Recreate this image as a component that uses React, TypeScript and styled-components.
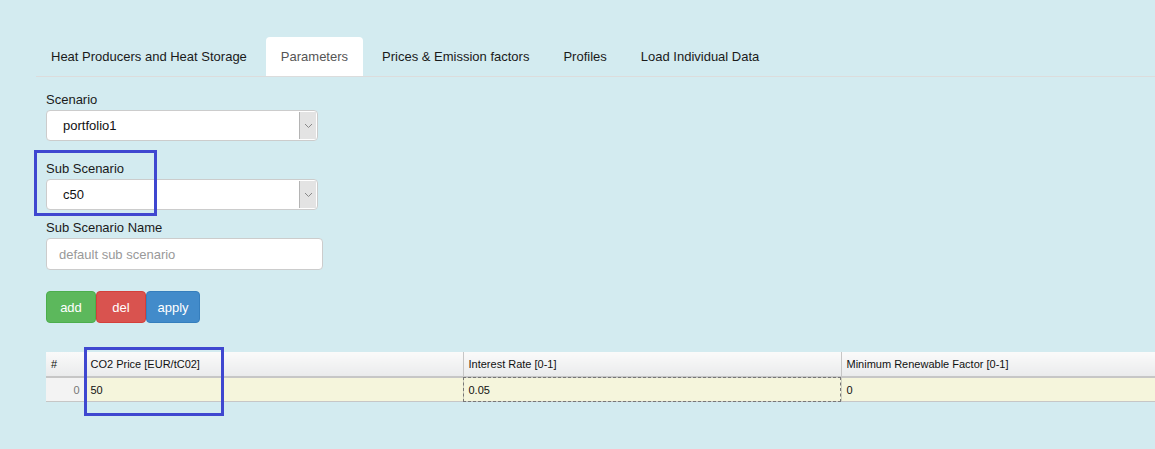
import React from 'react';
import styled, { createGlobalStyle, css } from 'styled-components';

const GlobalStyle = createGlobalStyle`
  html {
    overflow: hidden;
    background: #d3ebf0;
  }
  body {
    margin: 0;
    padding: 0;
    background: #d3ebf0;
    font-family: "Liberation Sans", Arial, sans-serif;
    color: #222;
  }
`;

const Page = styled.div`
  padding: 37px 0 0 36px;
`;

const TabBar = styled.ul`
  display: flex;
  list-style: none;
  margin: 0;
  padding: 0;
  border-bottom: 1px solid #dcdcdc;
`;

const Tab = styled.li<{ $active?: boolean }>`
  height: 39px;
  line-height: 39px;
  padding: 0 15px;
  margin-right: 4px;
  font-size: 13px;
  color: #1a1a1a;
  border-radius: 4px 4px 0 0;
  cursor: pointer;

  ${(p) =>
    p.$active &&
    css`
      background: #fff;
      color: #555;
    `}
`;

const Form = styled.div`
  padding-left: 10px;
  margin-top: 14px;
`;

const Field = styled.div<{ $gap?: number }>`
  position: relative;
  display: flex;
  flex-direction: column;
  margin-bottom: ${(p) => p.$gap ?? 9}px;
`;

const Label = styled.label`
  font-size: 13px;
  line-height: 18px;
  margin-bottom: 1px;
  color: #1a1a1a;
`;

const SelectBox = styled.div`
  box-sizing: border-box;
  width: 272px;
  height: 31px;
  display: flex;
  align-items: center;
  background: #fff;
  border: 1px solid #ccc;
  border-radius: 4px;
  font-size: 13px;
  color: #111;
  padding-left: 16px;
`;

const SelectValue = styled.span`
  flex: 1;
`;

const SelectArrow = styled.span`
  box-sizing: border-box;
  width: 17px;
  align-self: stretch;
  margin: 1px;
  background: #e3e3e3;
  border-left: 1px solid #b4b4b4;
  display: flex;
  align-items: center;
  justify-content: center;
`;

const TextInput = styled.input`
  box-sizing: border-box;
  width: 277px;
  height: 32px;
  border: 1px solid #ccc;
  border-radius: 4px;
  padding: 0 12px;
  font-family: inherit;
  font-size: 13px;
  color: #333;
  background: #fff;
  outline: none;

  &::placeholder {
    color: #999;
  }
`;

const ButtonRow = styled.div`
  display: flex;
  margin-top: 21px;
`;

const variants = {
  success: { bg: '#5cb85c', border: '#4cae4c', width: 50 },
  danger: { bg: '#d9534f', border: '#d43f3a', width: 50 },
  primary: { bg: '#428bca', border: '#357ebd', width: 54 },
};

const Button = styled.button<{ $variant: keyof typeof variants }>`
  width: ${(p) => variants[p.$variant].width}px;
  height: 32px;
  padding: 0;
  border: 1px solid ${(p) => variants[p.$variant].border};
  background: ${(p) => variants[p.$variant].bg};
  color: #fff;
  font-family: inherit;
  font-size: 13px;
  border-radius: 4px;
  cursor: pointer;
`;

const Highlight = styled.div`
  position: absolute;
  border: 3px solid #3f47d0;
  pointer-events: none;
`;

const TableWrap = styled.div`
  position: relative;
  margin-top: 29px;
  margin-left: 10px;
  padding-bottom: 48px;
`;

const Grid = styled.table`
  border-collapse: collapse;
  table-layout: fixed;
  width: 1173px;
  font-size: 11px;
  color: #111;
`;

const HeadCell = styled.th<{ $corner?: boolean }>`
  height: 24px;
  padding: 0 5px;
  text-align: left;
  font-weight: normal;
  background: linear-gradient(#fafafa, #eaebec);
  border-bottom: 2px solid #c6c6c6;
  border-left: ${(p) => (p.$corner ? 'none' : '1px solid #c6c6c6')};
`;

const RowHead = styled.td`
  height: 23px;
  padding: 0 5px;
  text-align: right;
  color: #777;
  background: #f3f3f3;
  border-bottom: 1px solid #c6c6c6;
`;

const Cell = styled.td<{ $focused?: boolean }>`
  height: 23px;
  padding: 0 5px;
  background: #f5f5dc;
  border-bottom: 1px solid #c6c6c6;
  border-left: 1px solid #d0d0c0;

  ${(p) =>
    p.$focused &&
    css`
      outline: 1px dashed #777;
      outline-offset: -1px;
    `}
`;

const Chevron = () => (
  <svg width="9" height="6" viewBox="0 0 9 6">
    <path d="M1 1l3.5 3.5L8 1" fill="none" stroke="#888" strokeWidth="1" />
  </svg>
);

const Select = ({ value }: { value: string }) => (
  <SelectBox>
    <SelectValue>{value}</SelectValue>
    <SelectArrow>
      <Chevron />
    </SelectArrow>
  </SelectBox>
);

const tabs = [
  'Heat Producers and Heat Storage',
  'Parameters',
  'Prices & Emission factors',
  'Profiles',
  'Load Individual Data',
];

export default function App() {
  return (
    <>
      <GlobalStyle />
      <Page>
        <TabBar>
          {tabs.map((t) => (
            <Tab key={t} $active={t === 'Parameters'}>
              {t}
            </Tab>
          ))}
        </TabBar>

        <Form>
          <Field $gap={19}>
            <Label>Scenario</Label>
            <Select value="portfolio1" />
          </Field>

          <Field>
            <Label>Sub Scenario</Label>
            <Select value="c50" />
            <Highlight style={{ left: -12, top: -10, width: 117, height: 60 }} />
          </Field>

          <Field>
            <Label>Sub Scenario Name</Label>
            <TextInput placeholder="default sub scenario" />
          </Field>

          <ButtonRow>
            <Button $variant="success">add</Button>
            <Button $variant="danger">del</Button>
            <Button $variant="primary">apply</Button>
          </ButtonRow>
        </Form>

        <TableWrap>
          <Grid>
            <colgroup>
              <col style={{ width: 39 }} />
              <col style={{ width: 378 }} />
              <col style={{ width: 378 }} />
              <col style={{ width: 378 }} />
            </colgroup>
            <thead>
              <tr>
                <HeadCell $corner>#</HeadCell>
                <HeadCell>CO2 Price [EUR/tC02]</HeadCell>
                <HeadCell>Interest Rate [0-1]</HeadCell>
                <HeadCell>Minimum Renewable Factor [0-1]</HeadCell>
              </tr>
            </thead>
            <tbody>
              <tr>
                <RowHead>0</RowHead>
                <Cell>50</Cell>
                <Cell $focused>0.05</Cell>
                <Cell>0</Cell>
              </tr>
            </tbody>
          </Grid>
          <Highlight style={{ left: 38, top: -5, width: 134, height: 63 }} />
        </TableWrap>
      </Page>
    </>
  );
}
